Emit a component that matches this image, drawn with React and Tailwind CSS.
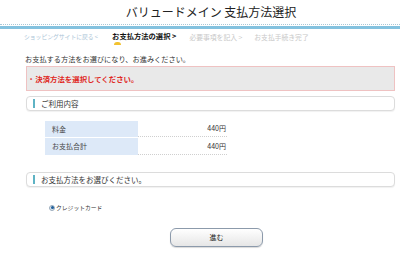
import React from 'react';

const jp = { fontFamily: '"Noto Sans CJK JP", "Noto Sans", sans-serif' };

function SectionHeader({ children }) {
  return (
    <div className="flex h-[15px] items-center rounded-[4px] border border-[#dcdcdc] bg-white shadow-[0_1px_1px_rgba(0,0,0,0.06)]">
      <span className="ml-[6px] h-[9px] w-[2px] bg-[#5eb3c4]" />
      <span className="ml-[6px] text-[7.5px] leading-none text-[#333]">{children}</span>
    </div>
  );
}

function Breadcrumb() {
  return (
    <div className="flex h-[12px] items-center pl-[24px] text-[5.8px] leading-none">
      <span className="text-[#a9c3d6]">ショッピングサイトに戻る &lt;</span>
      <span className="relative ml-[14px] text-[7.3px] font-bold text-[#111]">
        お支払方法の選択 &gt;
        <span className="absolute left-[2px] top-[9px] h-[3px] w-[7px] rounded-t-full bg-[#f2c230]" />
      </span>
      <span className="ml-[13px] text-[6.8px] text-[#c8c8c8]">必要事項を記入 &gt;</span>
      <span className="ml-[12px] text-[6.8px] text-[#c8c8c8]">お支払手続き完了</span>
    </div>
  );
}

export default function App() {
  const rows = [
    { label: '料金', value: '440円', h: 'h-[16px]' },
    { label: 'お支払合計', value: '440円', h: 'h-[17px]' },
  ];

  return (
    <div className="h-[271px] w-[400px] overflow-hidden bg-white text-[#333]" style={jp}>
      <div className="pl-[22px] pt-[4px] text-center text-[12px] leading-[16px] text-[#222]">
        バリュードメイン 支払方法選択
      </div>
      <div className="mt-[4px] border-t border-dotted border-[#a8c8d8]" />
      <div className="mt-[1px] h-[3px] bg-[#84c2df]" />
      <div className="mt-[2px]">
        <Breadcrumb />
      </div>

      <div className="mt-[11px] pl-[25px] text-[7.2px] leading-[10px]">
        お支払する方法をお選びになり、お進みください。
      </div>

      <div className="ml-[26px] mr-[5px]">
        <div className="mt-[2px] flex h-[25px] items-center border border-[#efc2c2] bg-[#e9e9e9] pl-[3px] text-[7.4px] font-bold leading-none text-[#e0281e]">
          <span className="mr-[3px] text-[6px]">•</span>
          決済方法を選択してください。
        </div>

        <div className="mt-[5px]">
          <SectionHeader>ご利用内容</SectionHeader>
        </div>

        <div className="ml-[19px] mt-[10px] flex w-[182px] flex-col gap-[1px]">
          {rows.map((row) => (
            <div key={row.label} className={`flex ${row.h} text-[7px] leading-none`}>
              <div className="flex w-[93px] items-center bg-[#dde9f8] pl-[7px] text-[#444]">{row.label}</div>
              <div className="flex flex-1 items-center justify-end border-b border-dotted border-[#cfcfcf] pr-[1px] text-[#333]">
                {row.value}
              </div>
            </div>
          ))}
        </div>

        <div className="mt-[17px]">
          <SectionHeader>お支払方法をお選びください。</SectionHeader>
        </div>

        <div className="ml-[23px] mt-[16px] flex h-[9px] items-center text-[5.8px] leading-none text-[#333]">
          <span className="flex h-[6px] w-[6px] items-center justify-center rounded-full border border-[#9ab] bg-[#dfe8ef]">
            <span className="h-[3px] w-[3px] rounded-full bg-[#1f5f9a]" />
          </span>
          <span className="ml-[1px]">クレジットカード</span>
        </div>
      </div>

      <div className="ml-[170px] mt-[16px]">
        <button
          type="button"
          className="flex h-[19px] w-[93px] items-center justify-center rounded-[6px] border border-[#8c9aab] bg-gradient-to-b from-white to-[#e6e6e6] text-[7px] leading-none text-[#222] shadow-[0_1px_1px_rgba(0,0,0,0.15)]"
        >
          進む
        </button>
      </div>
    </div>
  );
}
